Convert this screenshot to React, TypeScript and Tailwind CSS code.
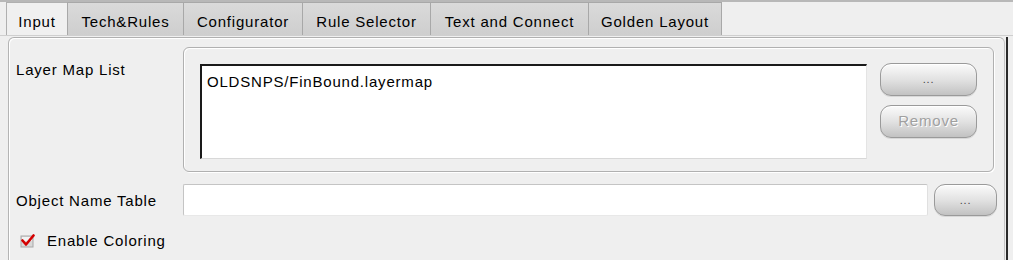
import React from 'react'

const TABS = [
  { label: 'Input', w: 'w-[61px]' },
  { label: 'Tech&Rules', w: 'w-[116px]' },
  { label: 'Configurator', w: 'w-[119px]' },
  { label: 'Rule Selector', w: 'w-[128px]' },
  { label: 'Text and Connect', w: 'w-[158px]' },
  { label: 'Golden Layout', w: 'w-[134px]' },
]

function GelButton({
  children,
  disabled = false,
  className = '',
}: {
  children: React.ReactNode
  disabled?: boolean
  className?: string
}) {
  return (
    <button
      type="button"
      className={`flex items-center justify-center rounded-[11px] border border-[#9a9a9a] bg-gradient-to-b from-[#fbfbfb] via-[#e2e2e2] to-[#c2c2c2] shadow-[inset_0_1px_0_#ffffff,0_1px_0_#d8d8d8] ${
        disabled ? 'text-[#a0a0a0] [text-shadow:1px_1px_0_#ffffff]' : 'text-[#444]'
      } ${className}`}
    >
      {children}
    </button>
  )
}

function Check() {
  return (
    <svg width="16" height="14" viewBox="0 0 16 14" className="shrink-0">
      <rect x="1" y="2" width="12" height="11" fill="#d8d8d8" stroke="#a8a8a8" />
      <rect x="2" y="3" width="10" height="4" fill="#f2f2f2" />
      <path d="M2.5 6.5 L6 10.5 L13.5 1.5" fill="none" stroke="#d40000" strokeWidth="2.6" strokeLinecap="round" strokeLinejoin="round" />
    </svg>
  )
}

export default function App() {
  return (
    <div className="h-[264px] w-[1013px] overflow-hidden bg-white font-['Liberation_Sans',Arial,sans-serif] text-[15px] tracking-[0.8px] text-black">
      <div className="flex h-[260px] flex-col border-t-2 border-[#b8b8b8] bg-[#efefef]">
        {/* tab strip */}
        <div className="flex h-[34px] items-end border-b border-[#cfcfcf] pl-[6px] pt-[1px]">
          {TABS.map((t, i) => (
            <div
              key={t.label}
              className={`flex h-[33px] items-center justify-center border-t border-l pt-[6px] ${t.w} ${
                i === 0
                  ? 'border-[#b0b0b0] bg-[#f0f0f0]'
                  : 'border-[#a8a8a8] bg-gradient-to-b from-[#dadada] to-[#cecece]'
              } ${i === TABS.length - 1 ? 'border-r' : ''}`}
            >
              {t.label}
            </div>
          ))}
        </div>

        {/* page */}
        <div className="flex flex-1 pt-[1px]">
          <div className="ml-[8px] flex w-[997px] flex-col rounded-t-[6px] border-t border-r border-l border-t-[#b0b0b0] border-r-[#c4c4c4] border-l-[#b4b4b4] shadow-[inset_1px_1px_0_#ffffff]">
            <div className="mt-[9px] flex">
              <div className="w-[174px] pt-[12px] pl-[7px]">Layer Map List</div>
              <div className="mr-[10px] flex flex-1 gap-[13px] rounded-[6px] border border-[#b0b0b0] pt-[16px] pr-[15px] pb-[12px] pl-[16px] shadow-[inset_1px_1px_0_#ffffff,1px_1px_0_#ffffff]">
                <div className="h-[95px] w-[667px] border-t-2 border-l-2 border-t-[#1a1a1a] border-l-[#1a1a1a] border-r border-b border-r-[#e4e4e4] border-b-[#d8d8d8] bg-white px-[5px] pt-[5px]">
                  OLDSNPS/FinBound.layermap
                </div>
                <div className="flex flex-col gap-[9px]">
                  <GelButton className="-mt-[1px] h-[33px] w-[97px] text-[11px]">...</GelButton>
                  <GelButton disabled className="h-[33px] w-[97px]">
                    Remove
                  </GelButton>
                </div>
              </div>
            </div>

            <div className="mt-[12px] flex items-center">
              <div className="w-[174px] pt-[2px] pl-[7px]">Object Name Table</div>
              <div className="h-[32px] w-[745px] rounded-[2px] border border-[#c4c4c4] border-b-[#e8e8e8] border-r-[#e0e0e0] bg-white" />
              <GelButton className="ml-[6px] h-[32px] w-[63px] text-[11px]">...</GelButton>
            </div>

            <div className="mt-[14px] flex items-center gap-[11px] pl-[11px]">
              <Check />
              <span>Enable Coloring</span>
            </div>
          </div>
          <div className="ml-[1px] w-[2px] bg-[#2a2a2a]" />
        </div>
      </div>
    </div>
  )
}
